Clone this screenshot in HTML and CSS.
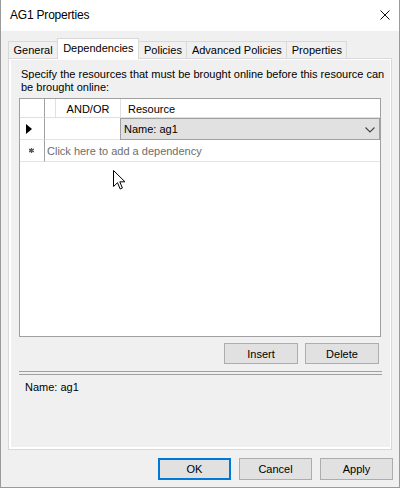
FILE: index.html
```html
<!DOCTYPE html>
<html>
<head>
<meta charset="utf-8">
<link rel="stylesheet" href="styles.css">
</head>
<body>
<div class="window">
  <div class="titlebar">
    <span class="title">AG1 Properties</span>
    <span class="close">
      <svg width="10" height="10" viewBox="0 0 10 10"><path d="M0.5 0.5 L9.5 9.5 M9.5 0.5 L0.5 9.5" stroke="#111" stroke-width="1" fill="none"/></svg>
    </span>
  </div>
  <div class="body">
    <div class="tabs">
      <div class="tab">General</div>
      <div class="tab selected">Dependencies</div>
      <div class="tab">Policies</div>
      <div class="tab">Advanced Policies</div>
      <div class="tab">Properties</div>
    </div>
    <div class="panel">
      <div class="page">
        <div class="label">Specify the resources that must be brought online before this resource can be brought online:</div>
        <div class="grid">
          <div class="grid-rows">
            <div class="hcell rowhead"></div>
            <div class="hcell narrow"></div>
            <div class="hcell andor">AND/OR</div>
            <div class="hcell res">Resource</div>

            <div class="cell rowhead current">
              <svg width="6" height="10" viewBox="0 0 6 10"><path d="M0 0 L6 5 L0 10 Z" fill="#000"/></svg>
            </div>
            <div class="cell andor-val"></div>
            <div class="cell combo">
              <span>Name: ag1</span>
              <svg width="10" height="6" viewBox="0 0 10 6"><path d="M0.5 0.5 L5 5 L9.5 0.5" stroke="#444" stroke-width="1.1" fill="none"/></svg>
            </div>

            <div class="cell rowhead newmark">
              <svg width="5" height="5" viewBox="0 0 5 5"><path d="M2.5 0 L2.5 5 M0 1.2 L5 3.8 M0 3.8 L5 1.2" stroke="#555" stroke-width="1.3"/></svg>
            </div>
            <div class="cell newrow">Click here to add a dependency</div>
          </div>
          <svg class="cursor" width="13" height="21" viewBox="0 0 13 21"><path d="M0.5 0.5 L0.5 16.5 L4.5 12.7 L7.2 19 L9.4 18 L6.8 11.8 L12 11.8 Z" fill="#fff" stroke="#000" stroke-width="1" stroke-linejoin="miter"/></svg>
        </div>
        <div class="actions">
          <button class="btn">Insert</button>
          <button class="btn">Delete</button>
        </div>
        <div class="separator"></div>
        <div class="info">Name: ag1</div>
      </div>
    </div>
    <div class="footer">
      <button class="btn default">OK</button>
      <button class="btn">Cancel</button>
      <button class="btn">Apply</button>
    </div>
  </div>
</div>
</body>
</html>
```
FILE: styles.css
```css
* { box-sizing: border-box; }
html, body { margin: 0; padding: 0; background: #f0f0f0; }
body {
  font-family: "Liberation Sans", Arial, sans-serif;
  font-size: 11px;
  color: #000;
}
.window {
  width: 400px;
  height: 488px;
  border: 1px solid #9a9a9a;
  border-top: none;
  background: #f0f0f0;
  display: flex;
  flex-direction: column;
}
.titlebar {
  height: 31px;
  background: #fff;
  display: flex;
  align-items: center;
  justify-content: space-between;
  padding: 0 9px 1px 9px;
}
.title {
  font-size: 12px;
  letter-spacing: -0.2px;
}
.close {
  display: flex;
  width: 10px;
  height: 10px;
}
.body {
  flex: 1;
  padding: 7px 7px 0 7px;
  display: flex;
  flex-direction: column;
}
.tabs {
  display: flex;
  align-items: flex-end;
  height: 21px;
  margin-bottom: -1px;
  position: relative;
  z-index: 1;
}
.tab {
  height: 17px;
  margin-bottom: 1px;
  padding: 0 4.5px;
  border: 1px solid #d9d9d9;
  border-bottom: none;
  background: #f0f0f0;
  display: flex;
  align-items: center;
  margin-left: -1px;
  white-space: nowrap;
}
.tab:first-child { margin-left: 0; }
.tab.selected {
  height: 21px;
  margin-bottom: 0;
  background: #fff;
  padding: 0 5px 2px 5px;
  position: relative;
  z-index: 2;
}
.panel {
  height: 392px;
  border: 1px solid #d9d9d9;
  background: #fff;
  padding: 1px 1px 2px 2px;
  display: flex;
}
.page {
  flex: 1;
  background: #f0f0f0;
  padding: 8px 9px 0 8px;
  display: flex;
  flex-direction: column;
}
.label {
  line-height: 13px;
  padding-left: 2px;
  margin-right: -9px;
}
.grid {
  margin-top: 4px;
  height: 239px;
  border: 1px solid #a0a0a0;
  background: #fff;
  position: relative;
}
.grid-rows {
  display: grid;
  grid-template-columns: 25px 11px 65px 1fr;
  grid-template-rows: 19px 22px 22px;
}
.hcell {
  border-right: 1px solid #e0e0e0;
  border-bottom: 1px solid #e0e0e0;
  display: flex;
  align-items: center;
  white-space: nowrap;
}
.hcell.rowhead { border-right-color: #a0a0a0; }
.hcell.andor { justify-content: center; padding-top: 1px; }
.hcell.res { border-right: none; padding-left: 7px; padding-top: 1px; }
.cell {
  display: flex;
  align-items: center;
  border-bottom: 1px solid #e4e4e4;
}
.cell.rowhead {
  border-right: 1px solid #a0a0a0;
  padding-left: 6px;
}
.cell.rowhead.newmark { padding-left: 9px; }
.andor-val {
  grid-column: 2 / 4;
}
.combo {
  background: #e1e1e1;
  border: 1px solid #a0a0a0;
  justify-content: space-between;
  padding: 0 4px 0 3px;
  margin-left: -1px;
}
.combo svg { margin-top: 1px; }
.newrow {
  grid-column: 2 / 5;
  color: #6d6d6d;
  padding-left: 2px;
  white-space: nowrap;
}
.cursor {
  position: absolute;
  left: 93px;
  top: 71px;
}
.actions {
  display: flex;
  justify-content: flex-end;
  gap: 7px;
  margin-top: 6px;
  margin-right: 2px;
}
.btn {
  font-family: "Liberation Sans", Arial, sans-serif;
  font-size: 11px;
  color: #000;
  width: 74px;
  height: 21px;
  background: #e1e1e1;
  border: 1px solid #adadad;
  padding: 0;
  margin: 0;
}
.separator {
  margin-top: 7px;
  height: 4px;
  border-top: 1px solid #a0a0a0;
  border-bottom: 1px solid #a0a0a0;
  margin-right: -1px;
}
.info {
  margin-top: 6px;
  padding-left: 6px;
  line-height: 13px;
}
.footer {
  display: flex;
  justify-content: flex-end;
  gap: 8px;
  margin-top: 8px;
  margin-right: -1px;
}
.footer .btn {
  width: 73px;
  height: 22px;
}
.btn.default {
  border: 2px solid #0078d7;
}
```
